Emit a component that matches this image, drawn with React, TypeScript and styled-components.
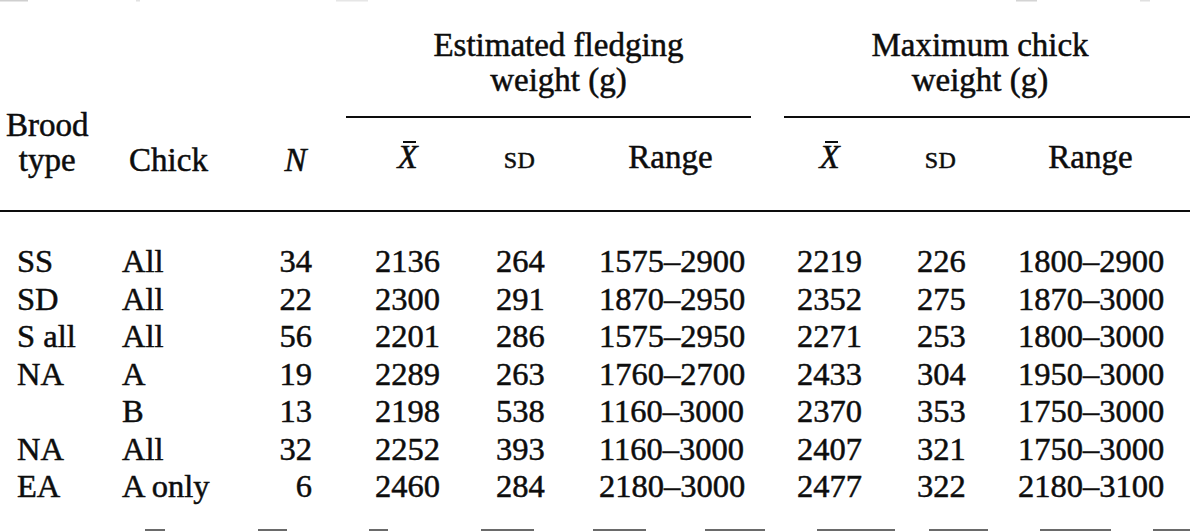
import React from 'react'
import styled, { createGlobalStyle } from 'styled-components'

const GlobalStyle = createGlobalStyle`
    html, body {
        margin: 0;
        padding: 0;
        background: #fff;
    }
    body {
        font-family: "Liberation Serif", "Times New Roman", serif;
        color: #0d0d0d;
    }
`

interface ColProps {
    $pad: number
    $align?: 'left' | 'right' | 'center'
}

interface GroupProps {
    $from: number
    $to: number
    $pad: number
    $padRight?: number
}

interface RuleProps {
    $inset: number
    $overhang?: number
}

const S = {
    Sheet: styled.div`
        width: 1201px;
        height: 531px;
        overflow: hidden;
        background: #fff;
        display: flex;
        flex-direction: column;
    `,
    Specks: styled.svg`
        display: block;
        flex: none;
    `,
    Table: styled.div`
        margin-top: 25px;
        display: grid;
        grid-template-columns: 122px 93px 97px 128px 103px 199px 120px 102px 199px 27px;
        -webkit-text-stroke: 0.5px #0d0d0d;
    `,
    Group: styled.div<GroupProps>`
        grid-row: 1;
        grid-column: ${p => p.$from} / ${p => p.$to};
        display: flex;
        flex-direction: column;
    `,
    GroupTitle: styled.div<GroupProps>`
        padding-left: ${p => p.$pad}px;
        padding-right: ${p => p.$padRight ?? 0}px;
        font-size: 33px;
        line-height: 35px;
        text-align: center;
    `,
    GroupRule: styled.div<RuleProps>`
        height: 2px;
        background: #0d0d0d;
        margin: 18px ${p => -(p.$overhang ?? 0)}px 22px ${p => p.$inset}px;
    `,
    HeadLabel: styled.div<ColProps>`
        grid-row: 1 / 3;
        align-self: end;
        padding-left: ${p => p.$pad}px;
        font-size: 33px;
        line-height: 35px;
        text-align: ${p => p.$align ?? 'center'};
    `,
    Stacked: styled.div`
        display: inline-block;
        text-align: center;
    `,
    SubHead: styled.div<ColProps>`
        grid-row: 2;
        padding-left: ${p => p.$pad}px;
        font-size: 33px;
        line-height: 35px;
        text-align: center;
    `,
    Italic: styled.span`
        font-style: italic;
    `,
    Mean: styled.span`
        position: relative;
        font-style: italic;
        &::before {
            content: '';
            position: absolute;
            left: 26%;
            right: 6%;
            top: 2px;
            height: 1.5px;
            background: #0d0d0d;
        }
    `,
    SmallCaps: styled.span`
        font-size: 24px;
        letter-spacing: 0.5px;
    `,
    HeaderRule: styled.div`
        grid-column: 1 / -1;
        height: 2px;
        background: #0d0d0d;
        margin: 32px 0 31px;
    `,
    Cell: styled.div<ColProps>`
        padding-left: ${p => p.$pad}px;
        font-size: 32.5px;
        line-height: 37.5px;
        text-align: ${p => p.$align ?? 'right'};
        white-space: nowrap;
    `,
    Spacer: styled.div`
        flex: 1;
    `
}

const columns: ColProps[] = [
    { $pad: 17, $align: 'left' },
    { $pad: 0, $align: 'left' },
    { $pad: 64 },
    { $pad: 63 },
    { $pad: 56 },
    { $pad: 56 },
    { $pad: 55 },
    { $pad: 55 },
    { $pad: 54 }
]

const rows: string[][] = [
    ['SS', 'All', '34', '2136', '264', '1575–2900', '2219', '226', '1800–2900'],
    ['SD', 'All', '22', '2300', '291', '1870–2950', '2352', '275', '1870–3000'],
    ['S all', 'All', '56', '2201', '286', '1575–2950', '2271', '253', '1800–3000'],
    ['NA', 'A', '19', '2289', '263', '1760–2700', '2433', '304', '1950–3000'],
    ['', 'B', '13', '2198', '538', '1160–3000', '2370', '353', '1750–3000'],
    ['NA', 'All', '32', '2252', '393', '1160–3000', '2407', '321', '1750–3000'],
    ['EA', 'A only', '6', '2460', '284', '2180–3000', '2477', '322', '2180–3100']
]

// torn edges of the scan
const topSpecks: [number, number, string][] = [
    [0, 28, '#cfcfcf'], [136, 4, '#e2e2e2'], [336, 32, '#e6e6e6'], [1016, 21, '#d4d4d4'], [1140, 10, '#e0e0e0']
]
const bottomSpecks: [number, number][] = [
    [145, 20], [258, 29], [369, 19], [481, 53], [593, 53], [705, 60], [817, 78], [929, 59], [1040, 71], [1153, 37]
]

const SubHeads = ({ start }: { start: number }) => <>
    <S.SubHead $pad={columns[start].$pad} style={{ gridColumn: start + 1 }}><S.Mean>X</S.Mean></S.SubHead>
    <S.SubHead $pad={columns[start + 1].$pad} style={{ gridColumn: start + 2 }}><S.SmallCaps>SD</S.SmallCaps></S.SubHead>
    <S.SubHead $pad={columns[start + 2].$pad} style={{ gridColumn: start + 3 }}>Range</S.SubHead>
</>

const App = () => {
    return <>
        <GlobalStyle />
        <S.Sheet>
            <S.Specks width="1201" height="3" viewBox="0 0 1201 3">
                {topSpecks.map(([x, w, c]) => <rect key={x} x={x} y={0} width={w} height={1.5} fill={c} />)}
            </S.Specks>
            <S.Table>
                <S.HeadLabel $pad={6} $align="left" style={{ gridColumn: 1 }}>
                    <S.Stacked>Brood<br />type</S.Stacked>
                </S.HeadLabel>
                <S.HeadLabel $pad={0} style={{ gridColumn: 2 }}>Chick</S.HeadLabel>
                <S.HeadLabel $pad={64} style={{ gridColumn: 3 }}><S.Italic>N</S.Italic></S.HeadLabel>

                <S.Group $from={4} $to={7} $pad={63}>
                    <S.GroupTitle $from={4} $to={7} $pad={63}>Estimated fledging<br />weight (g)</S.GroupTitle>
                    <S.GroupRule $inset={34} $overhang={9} />
                </S.Group>
                <S.Group $from={7} $to={11} $pad={55}>
                    <S.GroupTitle $from={7} $to={11} $pad={55} $padRight={27}>Maximum chick<br />weight (g)</S.GroupTitle>
                    <S.GroupRule $inset={42} />
                </S.Group>

                <SubHeads start={3} />
                <SubHeads start={6} />

                <S.HeaderRule />

                {rows.map((row, r) => row.map((value, c) =>
                    <S.Cell key={`${r}-${c}`} $pad={columns[c].$pad} $align={columns[c].$align}
                        style={{ gridColumn: c + 1, gridRow: r + 4 }}>
                        {value}
                    </S.Cell>
                ))}
            </S.Table>
            <S.Spacer />
            <S.Specks width="1201" height="2" viewBox="0 0 1201 2">
                {bottomSpecks.map(([x, w]) => <rect key={x} x={x} y={0} width={w} height={2} fill="#6a6a6a" />)}
            </S.Specks>
        </S.Sheet>
    </>
}

export default App
